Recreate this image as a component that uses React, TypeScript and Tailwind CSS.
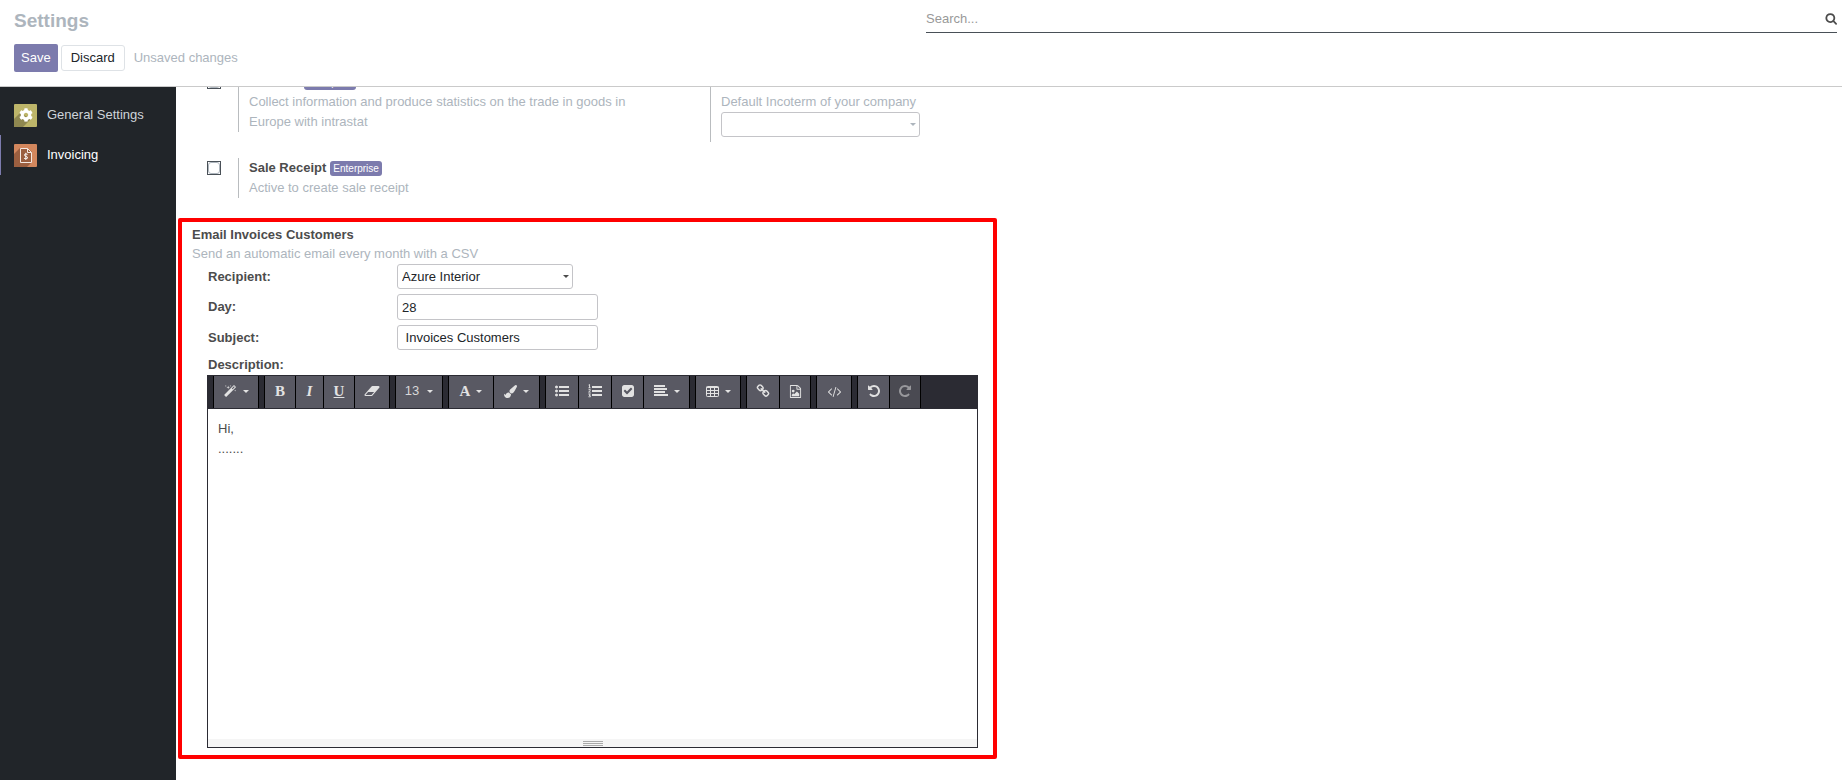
import React from "react";
import { FaCog } from "react-icons/fa";

type IconProps = { d: string; className?: string; viewBox?: string };

function Glyph({ d, className = "size-[13px]", viewBox = "0 0 1792 1792" }: IconProps) {
  return (
    <svg viewBox={viewBox} className={className} fill="currentColor" aria-hidden="true">
      <path fillRule="nonzero" d={d} />
    </svg>
  );
}

const paths = {
  search:
    "M1216 832q0-185-131.5-316.5t-316.5-131.5-316.5 131.5-131.5 316.5 131.5 316.5 316.5 131.5 316.5-131.5 131.5-316.5zm512 832q0 52-38 90t-90 38q-54 0-90-38l-343-342q-179 124-399 124-143 0-273.5-55.5t-225-150-150-225-55.5-273.5 55.5-273.5 150-225 225-150 273.5-55.5 273.5 55.5 225 150 150 225 55.5 273.5q0 220-124 399l343 343q37 37 37 90z",
  magic:
    "M1190 581l293-293-107-107-293 293zm447-293q0 27-18 45l-1286 1286q-18 18-45 18t-45-18l-198-198q-18-18-18-45t18-45l1286-1286q18-18 45-18t45 18l198 198q18 18 18 45zm-1351-190l98 30-98 30-30 98-30-98-98-30 98-30 30-98zm350 162l196 60-196 60-60 196-60-196-196-60 196-60 60-196zm930 478l98 30-98 30-30 98-30-98-98-30 98-30 30-98zm-640-640l98 30-98 30-30 98-30-98-98-30 98-30 30-98z",
  eraser:
    "M960 1408l336-384h-768l-336 384h768zm1013-1077q15 34 9.5 71.5t-30.5 65.5l-896 1024q-38 44-96 44h-768q-38 0-69.5-20.5t-47.5-54.5q-15-34-9.5-71.5t30.5-65.5l896-1024q38-44 96-44h768q38 0 69.5 20.5t47.5 54.5z",
  brush:
    "M1615 0q70 0 122.5 46.5t52.5 116.5q0 63-45 151-332 629-465 752-97 91-218 91-126 0-216.5-92.5t-90.5-219.5q0-128 92-212l638-579q59-54 130-54zm-909 1034q39 76 106.5 130t150.5 76l1 71q4 213-129.5 347t-348.5 134q-123 0-218-46.5t-152.5-127.5-86.5-183-29-220q7 5 41 30t62 44.5 59 36.5 46 17q41 0 55-37 25-66 57.5-112.5t69.5-76 88-47.5 103-25.5 125-10.5z",
  listUl:
    "M384 1408q0 80-56 136t-136 56-136-56-56-136 56-136 136-56 136 56 56 136zm0-512q0 80-56 136t-136 56-136-56-56-136 56-136 136-56 136 56 56 136zm1408 416v192q0 13-9.5 22.5t-22.5 9.5h-1216q-13 0-22.5-9.5t-9.5-22.5v-192q0-13 9.5-22.5t22.5-9.5h1216q13 0 22.5 9.5t9.5 22.5zm-1408-928q0 80-56 136t-136 56-136-56-56-136 56-136 136-56 136 56 56 136zm1408 416v192q0 13-9.5 22.5t-22.5 9.5h-1216q-13 0-22.5-9.5t-9.5-22.5v-192q0-13 9.5-22.5t22.5-9.5h1216q13 0 22.5 9.5t9.5 22.5zm0-512v192q0 13-9.5 22.5t-22.5 9.5h-1216q-13 0-22.5-9.5t-9.5-22.5v-192q0-13 9.5-22.5t22.5-9.5h1216q13 0 22.5 9.5t9.5 22.5z",
  listOl:
    "M40 120L170 20H260V440H350V530H40V440H140V150L80 190ZM40 760Q60 640 200 640Q350 640 350 780Q350 860 190 1000H360V1100H30V1010Q240 840 240 780Q240 730 190 730Q140 730 110 800ZM50 1230H340V1310L250 1420Q360 1450 360 1560Q360 1710 190 1710Q90 1710 30 1650L80 1560Q130 1610 180 1610Q240 1610 240 1560Q240 1500 130 1500V1430L200 1330H50ZM512 256H1792V512H512ZM512 768H1792V1024H512ZM512 1280H1792V1536H512Z",
  check:
    "M813 1299l614-614q19-19 19-45t-19-45l-102-102q-19-19-45-19t-45 19l-467 467-211-211q-19-19-45-19t-45 19l-102 102q-19 19-19 45t19 45l358 358q19 19 45 19t45-19zm851-883v960q0 119-84.5 203.5t-203.5 84.5h-960q-119 0-203.5-84.5t-84.5-203.5v-960q0-119 84.5-203.5t203.5-84.5h960q119 0 203.5 84.5t84.5 203.5z",
  align:
    "M0 128H1408V384H0ZM0 512H1664V768H0ZM0 896H1408V1152H0ZM0 1280H1792V1536H0Z",
  link:
    "M1520 1216q0-40-28-68l-208-208q-28-28-68-28-42 0-72 32 3 3 19 18.5t21.5 21.5 15 19 13 25.5 3.5 27.5q0 40-28 68t-68 28q-15 0-27.5-3.5t-25.5-13-19-15-21.5-21.5-18.5-19q-33 31-33 73 0 40 28 68l206 207q27 27 68 27 40 0 68-26l147-146q28-28 28-67zm-703-705q0-40-28-68l-206-207q-28-28-68-28-39 0-68 27l-147 146q-28 28-28 67 0 40 28 68l208 208q27 27 68 27 42 0 72-31-3-3-19-18.5t-21.5-21.5-15-19-13-25.5-3.5-27.5q0-40 28-68t68-28q15 0 27.5 3.5t25.5 13 19 15 21.5 21.5 18.5 19q33-31 33-73zm895 705q0 120-85 203l-147 146q-83 83-203 83-121 0-204-85l-206-207q-83-83-83-203 0-123 88-209l-88-88q-86 88-208 88-120 0-204-84l-208-208q-84-84-84-204t85-203l147-146q83-83 203-83 121 0 204 85l206 207q83 83 83 203 0 123-88 209l88 88q86-88 208-88 120 0 204 84l208 208q84 84 84 204z",
  image:
    "M1596 380q28 28 48 76t20 88v1152q0 40-28 68t-68 28h-1344q-40 0-68-28t-28-68v-1600q0-40 28-68t68-28h896q40 0 88 20t76 48zm-444-244v376h376q-10-29-22-41l-313-313q-12-12-41-22zm384 1528v-1024h-416q-40 0-68-28t-28-68v-416h-768v1536h1280zm-128-448v320h-1024v-192l192-192 128 128 384-384zm-832-192q-80 0-136-56t-56-136 56-136 136-56 136 56 56 136-56 136-136 56z",
  code:
    "M553 1399l-50 50q-10 10-23 10t-23-10l-466-466q-10-10-10-23t10-23l466-466q10-10 23-10t23 10l50 50q10 10 10 23t-10 23l-393 393 393 393q10 10 10 23t-10 23zm591-1067l-373 1291q-4 13-15.5 19.5t-23.5 2.5l-62-17q-13-4-19.5-15.5t-2.5-24.5l373-1291q4-13 15.5-19.5t23.5-2.5l62 17q13 4 19.5 15.5t2.5 24.5zm657 651l-466 466q-10 10-23 10t-23-10l-50-50q-10-10-10-23t10-23l393-393-393-393q-10-10-10-23t10-23l50-50q10-10 23-10t23 10l466 466q10 10 10 23t-10 23z",
  undo:
    "M1664 896q0 156-61 298t-164 245-245 164-298 61q-172 0-327-72.5t-264-204.5q-7-10-6.5-22.5t8.5-20.5l137-138q10-9 25-9 16 2 23 12 73 95 179 147t225 52q104 0 198.5-40.5t163.5-109.5 109.5-163.5 40.5-198.5-40.5-198.5-109.5-163.5-163.5-109.5-198.5-40.5q-98 0-188 35.5t-160 101.5l137 138q31 30 14 69-17 40-59 40h-448q-26 0-45-19t-19-45v-448q0-42 40-59 39-17 69 14l130 129q107-101 244.5-156.5t284.5-55.5q156 0 298 61t245 164 164 245 61 298z",
};

function TableIcon() {
  return (
    <svg viewBox="0 0 13 13" className="size-[13px]" fill="none" stroke="currentColor" aria-hidden="true">
      <rect x="0.5" y="1.5" width="12" height="10" rx="0.8" />
      <path d="M0.5 2.5H12.5M0.5 5.5H12.5M0.5 8.5H12.5M4.5 2V11.5M8.5 2V11.5" />
    </svg>
  );
}

function Caret({ className = "" }: { className?: string }) {
  return (
    <svg viewBox="0 0 6 3" className={`h-[3px] w-[6px] ${className}`} fill="currentColor" aria-hidden="true">
      <path d="M0 0H6L3 3Z" />
    </svg>
  );
}

function Tool({
  label,
  width,
  menu,
  disabled,
  children,
}: {
  label: string;
  width: string;
  menu?: boolean;
  disabled?: boolean;
  children: React.ReactNode;
}) {
  return (
    <button
      type="button"
      aria-label={label}
      disabled={disabled}
      className={`flex h-8 shrink-0 items-center justify-center gap-[6px] border-r border-black pb-[2px] ${width} ${
        disabled ? "bg-[#4a4a52] text-[#98989c]" : "bg-[#595963] text-[#e2e2e2]"
      }`}
    >
      {children}
      {menu && <Caret />}
    </button>
  );
}

function Group({ children }: { children: React.ReactNode }) {
  return <div className="flex border-l border-black">{children}</div>;
}

function Toolbar() {
  const serif = "font-['Liberation_Serif',serif] text-[15px] leading-4 font-bold";
  return (
    <div role="toolbar" aria-label="Formatting" className="flex flex-wrap gap-[5px] border-y border-[#2b2b33] bg-[#2b2b33] pl-[5px]">
      <Group>
        <Tool label="Style" width="w-[45px]" menu><Glyph d={paths.magic} /></Tool>
      </Group>
      <Group>
        <Tool label="Bold" width="w-[31px]"><span className={serif}>B</span></Tool>
        <Tool label="Italic" width="w-[28px]"><span className={`${serif} italic`}>I</span></Tool>
        <Tool label="Underline" width="w-[31px]"><span className={`${serif} underline`}>U</span></Tool>
        <Tool label="Remove font style" width="w-[35px]"><Glyph d={paths.eraser} viewBox="0 0 2048 1792" className="h-[14px] w-[16px]" /></Tool>
      </Group>
      <Group>
        <Tool label="Font size" width="w-[47px]" menu><span className="mr-[2px] text-[13px] text-[#d8d8d8]">13</span></Tool>
      </Group>
      <Group>
        <Tool label="Font color" width="w-[45px]" menu><span className={serif}>A</span></Tool>
        <Tool label="Background color" width="w-[46px]" menu><Glyph d={paths.brush} /></Tool>
      </Group>
      <Group>
        <Tool label="Unordered list" width="w-[33px]"><Glyph d={paths.listUl} className="size-[14px]" /></Tool>
        <Tool label="Ordered list" width="w-[33px]"><Glyph d={paths.listOl} className="size-[14px]" /></Tool>
        <Tool label="Checklist" width="w-[32px]"><Glyph d={paths.check} className="size-[14px]" /></Tool>
        <Tool label="Paragraph" width="w-[46px]" menu><Glyph d={paths.align} className="size-[14px]" /></Tool>
      </Group>
      <Group>
        <Tool label="Table" width="w-[45px]" menu><TableIcon /></Tool>
      </Group>
      <Group>
        <Tool label="Link" width="w-[33px]"><Glyph d={paths.link} className="size-[14px]" /></Tool>
        <Tool label="Picture" width="w-[31px]"><Glyph d={paths.image} /></Tool>
      </Group>
      <Group>
        <Tool label="Code view" width="w-[35px]"><Glyph d={paths.code} /></Tool>
      </Group>
      <Group>
        <Tool label="Undo" width="w-[32px]"><Glyph d={paths.undo} className="size-[14px]" /></Tool>
        <Tool label="Redo" width="w-[31px]" disabled><Glyph d={paths.undo} className="size-[14px] -scale-x-100" /></Tool>
      </Group>
    </div>
  );
}

function Check({ id }: { id: string }) {
  return (
    <span className="mt-[3px] mr-[17px] flex size-[14px] shrink-0 border border-[#495057]">
      <input id={id} type="checkbox" className="size-3 appearance-none rounded-[3px] border border-[#adb5bd] bg-white checked:bg-[#7c7bad]" />
    </span>
  );
}

function Setting({ id, title, children }: { id: string; title: string; children: React.ReactNode }) {
  return (
    <div className="flex">
      <Check id={id} />
      <div className="max-w-[400px] border-l border-[#b9bcbf] pl-[10px]">
        <div className="flex h-5 items-center gap-1">
          <label htmlFor={id} className="font-bold">{title}</label>
          <span className="rounded-[3px] bg-[#7c7bad] px-[3px] text-[10px] leading-[15px] text-white">Enterprise</span>
        </div>
        <p className="text-[#adb5bd]">{children}</p>
      </div>
    </div>
  );
}

function GeneralIcon() {
  return (
    <span className="relative flex size-[23px] items-center justify-center overflow-hidden rounded-[1px] bg-[#bdb569] text-white">
      <svg viewBox="0 0 23 23" className="absolute inset-0 size-full" aria-hidden="true">
        <path d="M6 9L0 15V23H9L17 15Z" fill="#8f8850" />
      </svg>
      <FaCog className="relative size-[14px]" />
    </span>
  );
}

function InvoicingIcon() {
  return (
    <svg viewBox="0 0 23 23" className="size-[23px] rounded-[1px]" aria-hidden="true">
      <rect width="23" height="23" fill="#d3875d" />
      <path d="M6 4L0 10V23H13L18 18V8L13 4Z" fill="#9b5f40" />
      <path d="M6.5 4.5H13.5L17.5 8.5V18.5H6.5ZM13.5 4.5V8.5H17.5" fill="none" stroke="#f4e9e2" strokeWidth="1" />
      <path d="M13.6 10.4Q11.6 9.4 10.6 10.4Q10 11.8 11.8 12.3Q14.2 12.9 13.4 14.3Q12 15.3 10 14.3M11.8 8.8V16" fill="none" stroke="#fff" strokeWidth="0.9" />
    </svg>
  );
}

export default function App() {
  const field = "w-[201px] rounded-[3px] border border-[#c4c4c8] bg-white px-1 text-[#212529]";
  return (
    <div className="flex h-screen flex-col overflow-hidden bg-white font-['Liberation_Sans',Arial,sans-serif] text-[13px] leading-5 text-[#4c4c4c]">
      <header className="flex shrink-0 border-b border-[#cacaca]">
        <div className="w-1/2 pt-[9px] pb-[14px] pl-[14px]">
          <h1 className="text-[19px] leading-6 font-bold text-[#adb5bd]">Settings</h1>
          <div className="mt-[11px] flex items-center">
            <button type="button" className="h-7 rounded-[2px] bg-[#7c7bad] px-[7px] text-white">Save</button>
            <button type="button" className="ml-[3px] h-[26px] rounded-[3px] border border-[#dee2e6] px-[9px] text-[#212529]">Discard</button>
            <span className="ml-[9px] text-[#adb5bd]">Unsaved changes</span>
          </div>
        </div>
        <div className="w-1/2 px-[5px] pt-[5px]">
          <div className="flex h-7 items-center border-b border-[#495057]">
            <input type="text" aria-label="Search" placeholder="Search..." className="min-w-0 flex-1 outline-none placeholder:text-[#999999]" />
            <button type="button" aria-label="Search" className="text-[#4c4c4c]"><Glyph d={paths.search} viewBox="0 0 1728 1792" className="h-[13px] w-3" /></button>
          </div>
        </div>
      </header>

      <div className="flex min-h-0 flex-1">
        <nav aria-label="Settings sections" className="w-[176px] shrink-0 bg-[#212529] pt-2">
          <a href="#general" className="flex h-10 items-center gap-[10px] pl-[14px] text-[#ced4da]">
            <GeneralIcon />
            General Settings
          </a>
          <a href="#invoicing" aria-current="page" className="flex h-10 items-center gap-[10px] border-l border-[#7c7bad] pl-[13px] text-white">
            <InvoicingIcon />
            Invoicing
          </a>
        </nav>

        <main className="min-w-0 flex-1 overflow-hidden">
          <div className="-mt-[15px] flex pl-[31px]">
            <div className="flex w-[503px] shrink-0 flex-col gap-[26px]">
              <Setting id="intrastat" title="Intrastat">
                Collect information and produce statistics on the trade in goods in Europe with intrastat
              </Setting>
              <Setting id="receipt" title="Sale Receipt">
                Active to create sale receipt
              </Setting>
            </div>
            <div className="self-start border-l border-[#b9bcbf] pb-[5px] pl-[10px]">
              <label htmlFor="incoterm" className="block font-bold">Default Incoterm</label>
              <p className="text-[#adb5bd]">Default Incoterm of your company</p>
              <div className="relative w-[199px]">
                <select id="incoterm" className="block h-[25px] w-full appearance-none rounded-[3px] border border-[#c4c4c8] bg-white px-1">
                  <option></option>
                </select>
                <Caret className="pointer-events-none absolute top-[11px] right-1 text-[#adb5bd]" />
              </div>
            </div>
          </div>

          <section className="mt-5 ml-[2px] max-w-[819px] rounded-[2px] border-4 border-[#ff0000] pt-1 pr-[15px] pb-[7px] pl-[10px]">
            <h2 className="leading-[18px] font-bold">Email Invoices Customers</h2>
            <p className="text-[#adb5bd]">Send an automatic email every month with a CSV</p>
            <div className="pl-[15px]">
              <div className="grid grid-cols-[189px_1fr] items-center gap-y-[5px] pl-px">
                <label htmlFor="recipient" className="font-bold">Recipient:</label>
                <div className="relative w-[176px]">
                  <select id="recipient" className="block h-[25px] w-full appearance-none rounded-[3px] border border-[#c4c4c8] bg-white px-1 text-[#212529]">
                    <option>Azure Interior</option>
                  </select>
                  <Caret className="pointer-events-none absolute top-[11px] right-1" />
                </div>
                <label htmlFor="day" className="font-bold">Day:</label>
                <input id="day" type="text" defaultValue="28" className={`h-[26px] ${field}`} />
                <label htmlFor="subject" className="font-bold">Subject:</label>
                <input id="subject" type="text" defaultValue=" Invoices Customers" className={`h-[25px] ${field}`} />
                <span id="description" className="col-span-2 font-bold">Description:</span>
              </div>
              <div className="border-x border-b border-[#2b2b33]">
                <Toolbar />
                <div
                  role="textbox"
                  aria-multiline="true"
                  aria-labelledby="description"
                  contentEditable
                  suppressContentEditableWarning
                  className="h-[330px] p-[10px] outline-none"
                >
                  <p>Hi,</p>
                  <p>.......</p>
                </div>
                <div className="flex h-2 flex-col items-center gap-px bg-[#f5f5f5] pt-[2px]">
                  <span className="h-px w-5 bg-[#a9a9a9]" />
                  <span className="h-px w-5 bg-[#a9a9a9]" />
                  <span className="h-px w-5 bg-[#a9a9a9]" />
                </div>
              </div>
            </div>
          </section>
        </main>
      </div>
    </div>
  );
}
